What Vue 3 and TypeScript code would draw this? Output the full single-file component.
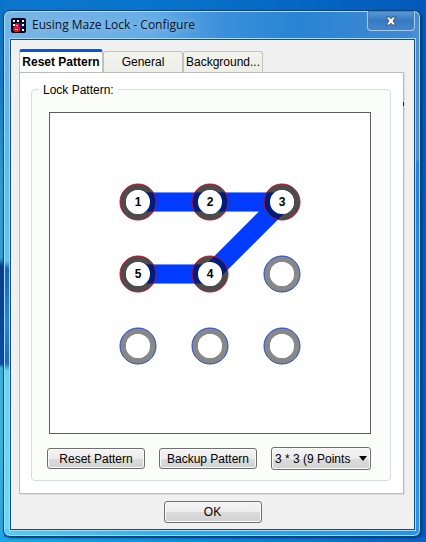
<script setup lang="ts">
import { computed, ref } from 'vue'

interface GridPoint {
  id: number
  x: number
  y: number
}

const tabs = ['Reset Pattern', 'General', 'Background...']
const activeTab = ref(0)
const gridSize = ref('3')
const path = ref<number[]>([0, 1, 2, 4, 3])

const points: GridPoint[] = Array.from({ length: 9 }, (_, id) => ({
  id,
  x: 88 + (id % 3) * 72,
  y: 89 + Math.floor(id / 3) * 72,
}))

const line = computed(() => path.value.map((id) => `${points[id].x},${points[id].y}`).join(' '))

function order(id: number): number {
  return path.value.indexOf(id) + 1
}

function resetPattern(): void {
  path.value = []
}
</script>

<template>
  <div class="desktop">
    <main class="window">
      <header class="titlebar">
        <svg class="app-icon" viewBox="0 0 15 15" aria-hidden="true">
          <rect width="15" height="15" rx="2" fill="#05051c" />
          <path d="M7 5h5v5H7z" fill="#15159c" />
          <g fill="#fff">
            <rect x="2" y="2" width="2" height="2" />
            <rect x="6" y="2" width="2" height="2" />
            <rect x="11" y="2" width="2" height="2" />
            <rect x="2" y="6" width="2" height="2" />
            <rect x="11" y="6" width="2" height="2" />
            <rect x="11" y="11" width="2" height="2" />
          </g>
          <path d="M3 9l1-2V6l2-1 2 1v2l1 1v4l-2 1H4l-2-2v-2z" fill="#e3182c" />
          <path d="M5 7h2v1H5zM4 11h3v1H4z" fill="#ffc6cc" />
        </svg>
        <h1 class="title">Eusing Maze Lock - Configure</h1>
        <button class="close" type="button" aria-label="Close">
          <svg viewBox="0 0 12 10" aria-hidden="true">
            <path
              d="M1 1h3.5L6 2.8 7.500 1H11L8 5l3 4H7.500L6 7.200 4.500 9H1l3-4z"
              fill="#fff"
              stroke="#40506e"
              stroke-width="1"
            />
          </svg>
        </button>
      </header>

      <div class="client">
        <div class="tabs" role="tablist">
          <button
            v-for="(tab, i) in tabs"
            :key="tab"
            class="tab"
            :class="{ active: activeTab === i }"
            type="button"
            role="tab"
            :aria-selected="activeTab === i"
            @click="activeTab = i"
          >
            {{ tab }}
          </button>
        </div>

        <section class="panel" role="tabpanel">
          <span class="marker" aria-hidden="true"></span>
          <div class="group" role="group" aria-labelledby="group-label">
            <div id="group-label" class="legend">Lock Pattern:</div>
            <svg class="board" viewBox="0 0 320 320">
              <polyline class="line" :points="line" />
              <circle
                v-for="p in points"
                :key="p.id"
                class="ring"
                :class="{ used: order(p.id) }"
                :cx="p.x"
                :cy="p.y"
                r="15"
              />
              <polyline class="line tint" :points="line" />
              <g v-for="p in points" :key="p.id">
                <circle :cx="p.x" :cy="p.y" r="12" fill="#fff" />
                <circle class="outline" :class="{ used: order(p.id) }" :cx="p.x" :cy="p.y" r="18" />
                <text v-if="order(p.id)" class="number" :x="p.x" :y="p.y + 4">{{ order(p.id) }}</text>
              </g>
            </svg>
            <div class="actions">
              <button class="btn" type="button" @click="resetPattern">Reset Pattern</button>
              <button class="btn" type="button">Backup Pattern</button>
              <div class="select-wrap">
                <select v-model="gridSize" class="select" aria-label="Grid size">
                  <option value="3">3 * 3 (9 Points</option>
                </select>
                <svg class="arrow" viewBox="0 0 8 5" aria-hidden="true">
                  <path d="M0 0h8L4 5z" fill="#000" />
                </svg>
              </div>
            </div>
          </div>
        </section>

        <footer class="footer">
          <button class="btn ok" type="button">OK</button>
        </footer>
      </div>
    </main>
  </div>
</template>

<style>
body {
  margin: 0;
}
</style>

<style scoped>
* {
  box-sizing: border-box;
}

.desktop {
  min-height: 100vh;
  padding: 10px 5px 5px 3px;
  background:
    linear-gradient(90deg, #1ba7e6, #0a86df 50%, #0562c6) bottom / 100% 5px no-repeat,
    linear-gradient(#0d71c6 0, #1378c4 80px, #2a9bce 180px, #2f9fcf 258px, #073d8b 266px, #0a4fa5 364px, #39b4d8 368px, #36b5d9 440px, #22a5e0) left / 4px 100% no-repeat,
    linear-gradient(90deg, #0c76ce, #0873cb 40%, #0459ba);
  font-family: "Liberation Sans", Arial, sans-serif;
  font-size: 12px;
  color: #000;
}

.window {
  padding: 0 5px 6px 6px;
  border: 1px solid #0d4478;
  border-radius: 7px;
  background:
    linear-gradient(90deg, #5cc9f5, #32adf3 40%, #2791eb) bottom / 100% 7px no-repeat,
    linear-gradient(#79b6e7 0, #69b2ea 60px, #5cb8f3 120px, #5ec4f6 250px, #1b62b6 258px, #2b87d6 310px, #2267b9 352px, #63d7f5 360px, #65daf7) left / 8px 100% no-repeat,
    linear-gradient(#4a8cd2 0, #4b8fd4 148px, #2484dd 152px, #2895ee) right / 8px 100% no-repeat,
    linear-gradient(90deg, #78b5e5, #66ade6 35%, #3c90db 52%, #2884d5 70%, #4289d1);
  box-shadow:
    inset 0 0 0 1px #a5dcf8,
    1px 1px 2px #04366f;
}

.titlebar {
  display: flex;
  align-items: flex-start;
  height: 28px;
}

.app-icon {
  width: 15px;
  height: 15px;
  margin: 7px 6px 0 1px;
}

.title {
  flex: 1;
  margin: 5px 0 0;
  font: 12px/18px "Open Sans", "Noto Sans", sans-serif;
  color: #07121f;
  text-shadow: 0 0 6px #a3d1f3;
}

.close {
  display: flex;
  align-items: center;
  justify-content: center;
  width: 48px;
  height: 20px;
  padding: 0;
  border: 1px solid #a6cbed;
  border-top: 0;
  border-radius: 0 0 4px 4px;
  background: linear-gradient(#5c9bd9, #3579c1 50%, #4489cf);
  box-shadow: inset 0 0 0 1px #4c7fb5;
}

.close svg {
  width: 12px;
  height: 10px;
}

.client {
  padding: 9px 10px 6px 8px;
  border: 1px solid #164f7d;
  background: #f0f0f0;
  box-shadow: 0 0 0 1px #9fdcf6;
}

.tabs {
  display: flex;
  align-items: flex-end;
}

.tab {
  height: 21px;
  min-width: 80px;
  padding: 0;
  border: 1px solid #c0c3bd;
  border-bottom: 0;
  border-radius: 3px 3px 0 0;
  background: linear-gradient(#f4f4ef, #eeeee8);
  font: inherit;
  color: #000;
  white-space: nowrap;
}

.tab.active {
  position: relative;
  height: 24px;
  min-width: 84px;
  margin-bottom: -1px;
  padding: 0 1px 1px;
  border-top: 3px solid #0456e8;
  background: #fff;
  font-weight: bold;
}

.panel {
  position: relative;
  padding: 16px 12px 12px 11px;
  border: 1px solid #b9bbbd;
  background: #fff;
  box-shadow: 1px 1px 0 #dedede;
}

.marker {
  position: absolute;
  top: 29px;
  right: -1px;
  width: 1px;
  height: 4px;
  background: #4a1010;
}

.group {
  padding: 0 19px 10px 15px;
  border: 1px solid #d7dedb;
  border-radius: 4px;
  background: #fbfdfa;
}

.legend {
  width: max-content;
  margin: -7px 0 14px -8px;
  padding: 0 4px;
  background: linear-gradient(#fff 50%, #fbfdfa 50%);
  line-height: 15px;
}

.board {
  display: block;
  width: calc(100% - 2px);
  margin-left: 2px;
  border: 1px solid #5c5c5c;
  background: #fff;
}

.line {
  fill: none;
  stroke: #003cff;
  stroke-width: 19px;
  stroke-linejoin: bevel;
}

.tint {
  stroke-opacity: 0.25;
}

.ring {
  fill: none;
  stroke: #888;
  stroke-width: 6px;
}

.ring.used {
  stroke: #000;
  stroke-opacity: 0.7;
}

.outline {
  fill: none;
  stroke: #1f48d0;
}

.outline.used {
  stroke: #c01030;
}

.number {
  font-size: 12px;
  font-weight: bold;
  text-anchor: middle;
}

.actions {
  display: flex;
  align-items: center;
  justify-content: space-between;
  margin-top: 13px;
}

.btn,
.select {
  border: 1px solid #6f6f6f;
  border-radius: 3px;
  background: linear-gradient(#f4f4f4, #ececec 50%, #dcdcdc 52%, #d2d2d2);
  box-shadow: inset 0 0 0 1px #fafafa;
  font: inherit;
  color: #000;
}

.btn {
  width: 98px;
  height: 21px;
  padding: 0;
}

.btn.ok {
  height: 22px;
}

.select-wrap {
  position: relative;
  width: 100px;
  height: 23px;
}

.select {
  width: 100%;
  height: 100%;
  padding: 0 16px 0 3px;
  appearance: none;
}

.arrow {
  position: absolute;
  top: 9px;
  right: 4px;
  width: 8px;
  height: 5px;
  pointer-events: none;
}

.footer {
  display: flex;
  justify-content: center;
  padding: 7px 0 0 2px;
}
</style>
